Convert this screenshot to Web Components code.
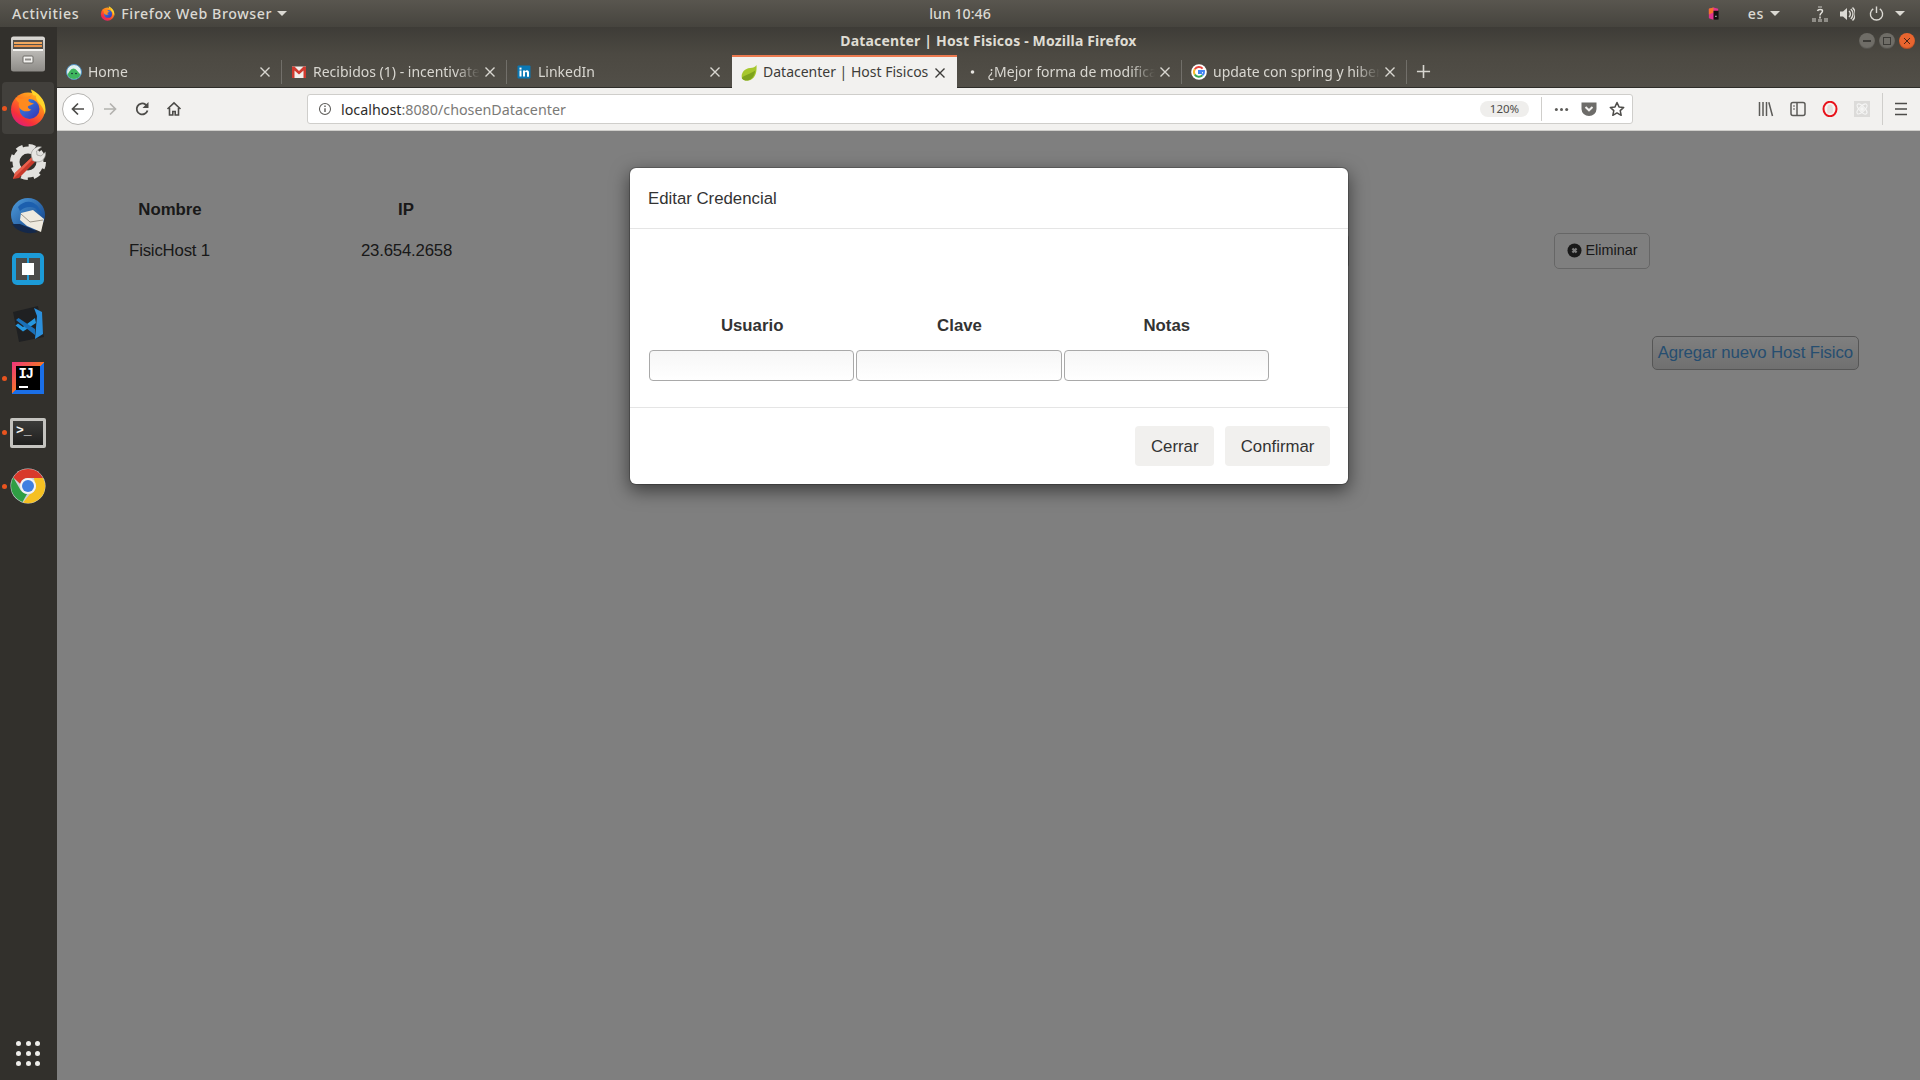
<!DOCTYPE html>
<html lang="es">
<head>
<meta charset="utf-8">
<title>Datacenter | Host Fisicos</title>
<style>
  html, body { margin: 0; height: 100%; overflow: hidden; }
  body { display: flex; flex-direction: column; font-family: "Noto Sans", sans-serif; background: #32302c; }
  .desk { flex: 1; display: flex; min-height: 0; }
</style>
</head>
<body>
<gnome-topbar></gnome-topbar>
<div class="desk">
  <app-dock></app-dock>
  <browser-window>
    <host-page></host-page>
    <credential-modal></credential-modal>
  </browser-window>
</div>

<script>
// Icon set, all drawn inline
const ICONS = {
  files: `<svg viewBox="0 0 36 36"><defs><linearGradient id="f" x1="0" y1="0" x2="0" y2="1"><stop offset="0" stop-color="#dbd9d5"/><stop offset="1" stop-color="#8d8b87"/></linearGradient></defs>
    <rect x="1" y="0.5" width="34" height="35" rx="2.5" fill="url(#f)"/><rect x="3" y="4" width="30" height="10" fill="#55504a"/>
    <rect x="4" y="6" width="28" height="2" fill="#f0a860"/><rect x="4" y="9" width="28" height="2" fill="#e8924a"/><rect x="3" y="13" width="30" height="2" fill="#f4f3f0"/>
    <rect x="13" y="20" width="10" height="7" rx="1" fill="#f2f1ee" stroke="#6d6b67"/><rect x="15" y="22.5" width="6" height="2" fill="#8f8d89"/></svg>`,
  firefox: `<svg viewBox="0 0 36 38"><defs><linearGradient id="a" x1="0.85" y1="0" x2="0.2" y2="1"><stop offset="0" stop-color="#ffc21f"/><stop offset="0.4" stop-color="#ff7a1f"/><stop offset="0.75" stop-color="#f6303a"/><stop offset="1" stop-color="#d81b86"/></linearGradient><linearGradient id="b" x1="0" y1="0" x2="1" y2="1"><stop offset="0" stop-color="#2f8ee8"/><stop offset="1" stop-color="#3b2fb0"/></linearGradient></defs>
    <circle cx="18" cy="20.5" r="17" fill="url(#a)"/><circle cx="19.5" cy="20" r="10" fill="url(#b)"/>
    <path d="M21 0.5c7 3 14.500 10 14.500 20 0 2-.3 3.500-.8 5-1-8-5-10-7-13-1.500-2.500-2-4-1.500-6-2 .5-4 0-5.200-6z" fill="#ffd52b"/>
    <path d="M6 9c3 0 5 1 7 .5 3-1 7-3 9-3-2 2-4 4-3.500 5.500 1 1.500 4 2.500 5.500 2-2 2.500-5 2-6 3.500-.8 1.500 2 3 3.500 3-2 2-6 2.500-9 1-3-1.500-4.500-4.500-3.500-7.500-1.500-1.500-3-3-3.500-5.500z" fill="#ff8a1f"/></svg>`,
  tools: `<svg viewBox="0 0 36 36"><circle cx="18" cy="18" r="12" fill="none" stroke="#e2e1de" stroke-width="7"/><circle cx="18" cy="18" r="15.500" fill="none" stroke="#e2e1de" stroke-width="5" stroke-dasharray="6.500 5.700"/>
    <path d="M3 35 L5 29 L22 13 L26 17 L9 34z" fill="#c8392b"/><path d="M3 35 L5 29 L22 13 L23.500 14.500 L7 31z" fill="#e8604c"/>
    <path d="M22 14c-2-4 0-9 5-11 2-.5 3.500-.5 4.500 0l-5 4 .5 4 4 1 4.500-4c.5 4-1 7-4 9-3 1.500-6.500 1-9-.5z" fill="#e6e5e2" stroke="#8a8986" stroke-width=".6"/></svg>`,
  thunderbird: `<svg viewBox="0 0 36 36"><defs><linearGradient id="t" x1="0" y1="0" x2="1" y2="1"><stop offset="0" stop-color="#4f9ede"/><stop offset="1" stop-color="#0f3a80"/></linearGradient></defs>
    <circle cx="18" cy="17" r="17" fill="url(#t)"/><path d="M2 26c5 8 16 11 26 8l-8-4-10-4z" fill="#14284a"/><path d="M11 15 L23 12 L34 21 L31 34 L17 28 L10 22z" fill="#efeadf"/><path d="M11 16 L20 24 L33 22" fill="none" stroke="#9c968a" stroke-width="1"/><path d="M8 9c4-5 12-7 17-3 3 2 6 6 7 11l-7-7c-5-2-11-1-15 3z" fill="#1c5fae"/></svg>`,
  bracket: `<svg viewBox="0 0 32 32"><rect x="0" y="0" width="32" height="32" rx="5" fill="#1c9bd8"/><rect x="4" y="5" width="24" height="22" fill="#4b4a48"/><rect x="10" y="10" width="12" height="12" fill="#fff"/><rect x="15" y="5" width="2" height="5" fill="#1c9bd8"/><rect x="15" y="22" width="2" height="5" fill="#1c9bd8"/></svg>`,
  vscode: `<svg viewBox="0 0 36 36"><path d="M3 6 L28 0 L34 31 L9 36z" fill="#1f2022"/><path d="M24 2 L32 6 L33 28 L25 33 L27 10z" fill="#2b8fdc"/><path d="M25 12 L13 21 L8 17.500 L5.500 19.500 L13 25.500 L26 17z" fill="#2597e0"/><path d="M6 14 L8.500 12 L25 23 L25 29 L16 22z" fill="#1a70b8"/></svg>`,
  chrome: `<svg viewBox="0 0 36 36"><circle cx="18" cy="18" r="17.500" fill="#c9d1d6"/>
    <path d="M3.300 9.500A17 17 0 0 1 33 10H18a8 8 0 0 0-7.700 6z" fill="#d8392b"/><path d="M3.300 9.500 10.500 22a8.500 8.500 0 0 0 6.500 4l-4.500 8A17 17 0 0 1 3.300 9.500z" fill="#2f9e44"/><path d="M33 10a17 17 0 0 1-20 24.500L20 26a8 8 0 0 0 4.500-12L24 10z" fill="#f5c022"/>
    <circle cx="18" cy="18" r="8" fill="#f3f3f3"/><circle cx="18" cy="18" r="6" fill="#3f7fe0"/></svg>`,
  basecamp: `<svg viewBox="0 0 16 16"><circle cx="8" cy="8" r="7.500" fill="#dff0ee" stroke="#4f8fc0"/><path d="M1.500 10.500c2-3 3.500-6 6-6 2.500 0 4.500 3.500 7 6-1 3-4 4.500-6.500 4.500s-5.500-1.500-6.500-4.500z" fill="#3fb55e"/><circle cx="6" cy="9.500" r=".8" fill="#123"/><circle cx="10" cy="9.500" r=".8" fill="#123"/></svg>`,
  gmail: `<svg viewBox="0 0 16 16"><rect x="1" y="2.500" width="14" height="11.500" fill="#f1efec"/><path d="M1 2.500h2.500L8 7l4.500-4.500H15V14h-2.500V6.500L8 10.500 3.500 6.500V14H1z" fill="#cf3a2f"/></svg>`,
  linkedin: `<svg viewBox="0 0 16 16"><rect x="1.500" y="1.500" width="13" height="13" rx="1" fill="#0a78b5"/><rect x="3.500" y="6.500" width="2" height="6" fill="#fff"/><rect x="3.500" y="3.600" width="2" height="2" fill="#fff"/><path d="M7 6.500h2v1c.5-.8 1.200-1.200 2-1.200 1.500 0 2 1 2 2.500v4h-2V9c0-.7-.3-1-.9-1-.7 0-1.100.5-1.100 1.200v3.300H7z" fill="#fff"/></svg>`,
  spring: `<svg viewBox="0 0 16 16"><path d="M15.500 0c.5 7-1 14-8 15.500-3 .3-5.500-.5-6.500-2C-.5 9 3 3.500 9 3c3-.2 5.500-1 6.500-3z" fill="#a6c72c"/><path d="M.8 13c3-3.500 8-3.500 13.500-7.500-1 6-3.500 9-7.500 10-2.500.3-5-.5-6-2.500z" fill="#7ea31c"/></svg>`,
  google: `<svg viewBox="0 0 16 16"><circle cx="8" cy="8" r="7.800" fill="#fff"/><path d="M11.600 4.600A5 5 0 0 0 3.800 5.300" fill="none" stroke="#e8453c" stroke-width="2"/><path d="M3.800 5.300a5 5 0 0 0 0 5.400" fill="none" stroke="#f9bb2d" stroke-width="2"/><path d="M3.800 10.700a5 5 0 0 0 7.600.6" fill="none" stroke="#34a853" stroke-width="2"/><path d="M11.400 11.300A5 5 0 0 0 13 7H8v2h3" fill="none" stroke="#4285f4" stroke-width="2"/></svg>`,
  dot: `<svg viewBox="0 0 16 16"><circle cx="6.500" cy="8" r="1.800" fill="#e6e4df"/></svg>`,
  back: `<svg viewBox="0 0 16 16" fill="none" stroke="#4d4c49" stroke-width="1.700"><path d="M14 8H2.500M8 2.500 2.500 8 8 13.500"/></svg>`,
  forward: `<svg viewBox="0 0 16 16" fill="none" stroke="#b3b2af" stroke-width="1.700"><path d="M2 8h11.500M8 2.500 13.500 8 8 13.500"/></svg>`,
  reload: `<svg viewBox="0 0 16 16" fill="none" stroke="#4d4c49" stroke-width="1.800"><path d="M13.500 9.500A5.500 5.500 0 1 1 11.500 3.500L13.500 5.500"/><path d="M14.500 1v6H8.500" fill="#4d4c49" stroke="none"/></svg>`,
  home: `<svg viewBox="0 0 16 16" fill="none" stroke="#4d4c49" stroke-width="1.600"><path d="M1.500 8 8 1.800 14.500 8"/><path d="M3.500 7v7h3.300v-3.500h2.400V14h3.300V7"/></svg>`,
  info: `<svg viewBox="0 0 16 16" fill="none" stroke="#5c5b58" stroke-width="1.200"><circle cx="8" cy="8" r="6.300"/><path d="M8 7v4.500" stroke-width="1.600"/><path d="M8 4v1.700" stroke-width="1.600"/></svg>`,
  dots: `<svg viewBox="0 0 16 16" fill="#5c5b58"><circle cx="2.500" cy="8" r="1.600"/><circle cx="8" cy="8" r="1.600"/><circle cx="13.500" cy="8" r="1.600"/></svg>`,
  pocket: `<svg viewBox="0 0 16 16"><path d="M.5 1.500h15V8a7.500 7 0 0 1-15 0z" fill="#6d6c69"/><path d="M4.500 6 8 9.300 11.500 6" fill="none" stroke="#f2f1ef" stroke-width="2"/></svg>`,
  star: `<svg viewBox="0 0 16 16"><path d="M8 1.500l2 4.400 4.700.5-3.500 3.200 1 4.700L8 11.900l-4.200 2.400 1-4.700L1.300 6.400 6 5.900z" fill="none" stroke="#4d4c49" stroke-width="1.500" stroke-linejoin="round"/></svg>`,
  library: `<svg viewBox="0 0 16 16" stroke="#5c5b58" stroke-width="1.500" fill="none"><path d="M1.500 1v14M5 1v14M8.500 1v14M10.800 1.200l3.700 13.800"/></svg>`,
  sidebar: `<svg viewBox="0 0 16 16" fill="none" stroke="#5c5b58" stroke-width="1.500"><rect x="1" y="1.500" width="14" height="13" rx="2"/><path d="M7 1.500v13"/><path d="M3 5h2M3 8h2" stroke-width="1.200"/></svg>`,
  opera: `<svg viewBox="0 0 16 16"><ellipse cx="8" cy="8" rx="6.500" ry="7.200" fill="#f7f4f2" stroke="#e8141c" stroke-width="2"/><path d="M5.500 12.500c-.6-3-.6-6 .4-8 .9-1.300 3.300-1.300 4.200 0 1 2 1 5 .4 8" fill="#e3dfdc"/></svg>`,
  ext: `<svg viewBox="0 0 16 16"><rect width="16" height="16" fill="#dcdbd9"/><circle cx="8" cy="8" r="2" fill="#f5f5f4"/><ellipse cx="8" cy="8" rx="6.500" ry="2.600" fill="none" stroke="#f5f5f4" stroke-width="1.100" transform="rotate(45 8 8)"/><ellipse cx="8" cy="8" rx="6.500" ry="2.600" fill="none" stroke="#f5f5f4" stroke-width="1.100" transform="rotate(-45 8 8)"/></svg>`,
  menu: `<svg viewBox="0 0 16 16" stroke="#4d4c49" stroke-width="1.700"><path d="M2 2.500h12M2 8h12M2 13.500h12"/></svg>`,
  close: `<svg viewBox="0 0 12 12" fill="none" stroke="currentColor" stroke-width="1.400"><path d="M1.500 1.500l9 9M10.500 1.500l-9 9"/></svg>`,
  plus: `<svg viewBox="0 0 16 16" stroke="#d8d6d0" stroke-width="1.700"><path d="M8 1v14M1 8h14"/></svg>`,
  jetbrains: `<svg viewBox="0 0 12 14"><path d="M1 2 6 .5 11 2v10l-5 1.800L1 12z" fill="#e0348f"/><path d="M1 2 6 .5V6L1 8z" fill="#f5732a"/><path d="M6 4h5.500v9.500L6 13.800z" fill="#111"/><path d="M7.800 10h1.600" stroke="#eee"/></svg>`,
  network: `<svg viewBox="0 0 16 16"><g fill="#8f8d87"><rect x="0" y="12" width="4" height="4"/><rect x="6" y="0" width="4" height="2"/><rect x="12" y="12" width="4" height="4"/><rect x="6" y="13" width="4" height="3"/></g><path d="M5.500 5c.5-2 5-2 5 0 0 2-2.500 2-2.500 4.500M8 10.500v2" fill="none" stroke="#e4e2dc" stroke-width="1.500"/></svg>`,
  volume: `<svg viewBox="0 0 16 16" fill="none" stroke="#dcdad4" stroke-width="1.400"><path d="M1 5.500h3L8 2v12l-4-3.500H1z" fill="#dcdad4" stroke="none"/><path d="M10 5a4 4 0 0 1 0 6M11.800 3a6.800 6.800 0 0 1 0 10M13.500 1.500a9 9 0 0 1 0 13"/></svg>`,
  power: `<svg viewBox="0 0 16 16" fill="none" stroke="#dcdad4" stroke-width="1.500"><path d="M8 .5v7"/><path d="M4.500 3a6.500 6.500 0 1 0 7 0"/></svg>`
};

class AppIcon extends HTMLElement {
  connectedCallback() {
    const size = this.getAttribute('size') || 16;
    this.attachShadow({ mode: 'open' });
    this.shadowRoot.innerHTML = `
      <style>
        :host { display: inline-flex; flex: none; width: ${size}px; height: ${size}px; }
        svg { width: 100%; height: 100%; display: block; }
      </style>
      ${ICONS[this.getAttribute('name')] || ''}
    `;
  }
}

class GnomeTopbar extends HTMLElement {
  constructor() {
    super();
    this.attachShadow({ mode: 'open' });
    this.shadowRoot.innerHTML = `
      <style>
        :host {
          display: grid; grid-template-columns: 1fr auto 1fr; align-items: center;
          height: 27px; flex: none; color: #dbd9d3;
          font: 500 14.2px "Noto Sans", sans-serif;
          background: linear-gradient(#59564f, #46443e);
        }
        .side { display: flex; align-items: center; }
        .right { justify-content: flex-end; }
        .caret { width: 0; height: 0; border: 5px solid transparent; border-top: 5px solid #dbd9d3; border-bottom: 0; }
        .spaced { letter-spacing: .6px; }
        .activities { margin-left: 12px; }
        .ff { margin-left: 21px; }
        .app { margin-left: 6px; }
      </style>
      <div class="side">
        <span class="activities spaced">Activities</span>
        <app-icon class="ff" name="firefox" size="15"></app-icon>
        <span class="app spaced">Firefox Web Browser</span>
        <span class="caret" style="margin-left:5px"></span>
      </div>
      <div>lun 10:46</div>
      <div class="side right">
        <app-icon name="jetbrains" size="13"></app-icon>
        <span class="spaced" style="margin-left:28px">es</span>
        <span class="caret" style="margin-left:6px"></span>
        <app-icon style="margin-left:32px" name="network" size="16"></app-icon>
        <app-icon style="margin-left:11px" name="volume" size="16"></app-icon>
        <app-icon style="margin-left:14px" name="power" size="15"></app-icon>
        <span class="caret" style="margin-left:11px;margin-right:15px"></span>
      </div>
    `;
  }
}

class DockItem extends HTMLElement {
  connectedCallback() {
    this.attachShadow({ mode: 'open' });
    this.shadowRoot.innerHTML = `
      <style>
        :host { display: flex; align-items: center; justify-content: center; position: relative; width: 57px; height: 54px; }
        :host([active]) .box { background: rgba(255,255,255,.08); }
        .box { width: 52px; height: 52px; border-radius: 4px; display: flex; align-items: center; justify-content: center; margin-left: -1px; }
        :host([running])::before {
          content: ''; position: absolute; left: 2px; top: 25px; width: 5px; height: 5px; border-radius: 50%; background: #e9541f;
        }
      </style>
      <div class="box"><slot></slot></div>
    `;
  }
}

class AppDock extends HTMLElement {
  constructor() {
    super();
    this.attachShadow({ mode: 'open' });
    this.shadowRoot.innerHTML = `
      <style>
        :host { display: flex; flex-direction: column; width: 57px; flex: none; background: #32302c; }
        .grid { margin-top: auto; margin-bottom: 14px; margin-left: 16px; display: grid; grid-template-columns: repeat(3, 5px); gap: 5px 4.700px; }
        .grid i { width: 5px; height: 5px; border-radius: 50%; background: #efeeeb; }
        .ij, .term { display: flex; box-sizing: border-box; }
        .ij {
          width: 32px; height: 32px; padding: 4px; margin-left: -1px;
          background: linear-gradient(135deg, #f0347e, #f5732a 50%, #1b6fe8 50%, #1b6fe8);
        }
        .ij div { flex: 1; background: #000; color: #fff; font: 700 14px "Liberation Mono", monospace; letter-spacing: -1.5px; padding: 2px 0 0 3px; line-height: 12px; position: relative; }
        .ij div::after { content: ''; position: absolute; left: 3px; bottom: 2px; width: 9px; height: 2px; background: #fff; }
        .term {
          width: 36px; height: 30px; border: 3px solid #c4c3bf; border-radius: 2px; margin-top: 1px;
          background: linear-gradient(#3c3c3a, #1f1f1e); color: #f4f4f2;
          font: 700 13px "Liberation Mono", monospace; padding: 3px 0 0 3px; line-height: 14px;
        }
      </style>
      <dock-item><app-icon name="files" size="36"></app-icon></dock-item>
      <dock-item active running><app-icon name="firefox" size="38"></app-icon></dock-item>
      <dock-item><app-icon name="tools" size="36"></app-icon></dock-item>
      <dock-item><app-icon name="thunderbird" size="36"></app-icon></dock-item>
      <dock-item><app-icon name="bracket" size="32" style="margin-top:-2px"></app-icon></dock-item>
      <dock-item><app-icon name="vscode" size="36"></app-icon></dock-item>
      <dock-item running><div class="ij"><div>IJ</div></div></dock-item>
      <dock-item running><div class="term">&gt;_</div></dock-item>
      <dock-item running><app-icon name="chrome" size="36"></app-icon></dock-item>
      <div class="grid">${'<i></i>'.repeat(9)}</div>
    `;
  }
}

class BrowserTab extends HTMLElement {
  connectedCallback() {
    this.attachShadow({ mode: 'open' });
    this.shadowRoot.innerHTML = `
      <style>
        :host {
          display: flex; align-items: center; width: 225px; flex: none; box-sizing: border-box;
          padding: 2px 0 0 9px; position: relative; color: #d9d7d1; font-size: 14px;
        }
        :host([sep])::after { content: ''; position: absolute; right: 0; top: 5px; height: 24px; width: 1px; background: rgba(255,255,255,.2); }
        :host([active]) { background: #f2f1ef; color: #3d3c39; margin-bottom: -1px; border-top: 2px solid #ec7a50; padding-top: 0; }
        .label {
          margin: -2px 0 0 6px; width: 167px; white-space: nowrap; overflow: hidden;
          -webkit-mask-image: linear-gradient(to right, #000 85%, transparent);
        }
        :host([active]) .label { -webkit-mask-image: none; }
        .x { margin-left: 4px; }
      </style>
      <app-icon name="${this.getAttribute('icon')}" size="16"></app-icon>
      <span class="label"><slot></slot></span>
      <app-icon class="x" name="close" size="12"></app-icon>
    `;
  }
}

class BrowserWindow extends HTMLElement {
  constructor() {
    super();
    this.attachShadow({ mode: 'open' });
    this.shadowRoot.innerHTML = `
      <style>
        :host { display: flex; flex-direction: column; flex: 1; min-width: 0; font-family: "Noto Sans", sans-serif; }
        .head { background: linear-gradient(#3e3c37, #4c4942 45%, #524f48); flex: none; }
        .title {
          height: 28px; display: grid; grid-template-columns: 1fr auto 1fr; align-items: center;
          color: #dfdcd3; font-size: 14px; font-weight: 700; letter-spacing: .17px;
        }
        .title > span:nth-child(2) { margin-top: -2px; }
        .wbtns { display: flex; gap: 4px; justify-content: flex-end; padding-right: 5px; margin-top: -1px; }
        .wbtns i { width: 16px; height: 16px; border-radius: 50%; background: #6f6d67; box-shadow: inset 0 -1px 1px rgba(0,0,0,.25); position: relative; }
        .wbtns i.min::after { content: ''; position: absolute; left: 4px; top: 7.500px; width: 8px; height: 1.500px; background: #3c3b37; }
        .wbtns i.max::after { content: ''; position: absolute; left: 4px; top: 4px; width: 6px; height: 6px; border: 1px solid #3c3b37; }
        .wbtns i.cls { background: #e9652f; color: #3c2015; display: flex; align-items: center; justify-content: center; }
        .strip { display: flex; height: 32px; border-bottom: 1px solid #2e2d29; }
        .new { display: flex; align-items: center; padding: 0 0 0 9px; }
        .nav {
          height: 43px; flex: none; box-sizing: border-box; background: #f2f1ef; border-bottom: 1px solid #cfcecb;
          display: flex; align-items: center; position: relative;
        }
        .circle { width: 32px; height: 32px; margin-left: 5px; box-sizing: border-box; border: 1px solid #b5b4b1; border-radius: 50%; background: #fff; display: flex; align-items: center; justify-content: center; }
        .nb { width: 32px; height: 32px; display: flex; align-items: center; justify-content: center; }
        .url {
          width: 1326px; height: 30px; box-sizing: border-box; flex: none;
          background: #fff; border: 1px solid #cfcecb; border-radius: 3px; display: flex; align-items: center;
          font-size: 14.3px; color: #7b7a77; padding-left: 10px;
        }
        .url b { font-weight: 400; color: #2e2d2b; }
        .url .addr { margin-left: 9px; flex: 1; }
        .zoom { width: 49px; height: 16px; line-height: 16px; border-radius: 8px; background: #efeeec; font-size: 11.500px; color: #4d4c49; text-align: center; margin-right: 12px; }
        .vsep { width: 1px; height: 24px; background: #cfcecb; }
        .tail { display: flex; align-items: center; padding-left: 125px; }
        .tail app-icon { margin-right: 16px; }
        .body { flex: 1; position: relative; min-height: 0; background: #fff; }
      </style>
      <div class="head">
        <div class="title">
          <span></span>
          <span>Datacenter | Host Fisicos - Mozilla Firefox</span>
          <div class="wbtns"><i class="min"></i><i class="max"></i><i class="cls"><app-icon name="close" size="8"></app-icon></i></div>
        </div>
        <div class="strip">
          <browser-tab icon="basecamp" sep>Home</browser-tab>
          <browser-tab icon="gmail" sep>Recibidos (1) - incentivate</browser-tab>
          <browser-tab icon="linkedin">LinkedIn</browser-tab>
          <browser-tab icon="spring" active>Datacenter | Host Fisicos</browser-tab>
          <browser-tab icon="dot" sep>¿Mejor forma de modificar</browser-tab>
          <browser-tab icon="google" sep>update con spring y hibernate</browser-tab>
          <div class="new"><app-icon name="plus" size="15"></app-icon></div>
        </div>
      </div>
      <div class="nav">
        <div class="circle"><app-icon name="back" size="16"></app-icon></div>
        <div class="nb"><app-icon name="forward" size="16"></app-icon></div>
        <div class="nb"><app-icon name="reload" size="16"></app-icon></div>
        <div class="nb"><app-icon name="home" size="16"></app-icon></div>
        <div class="url" style="margin-left:117px">
          <app-icon name="info" size="14"></app-icon>
          <span class="addr"><b>localhost</b>:8080/chosenDatacenter</span>
          <span class="zoom">120%</span>
          <span class="vsep"></span>
          <app-icon style="margin-left:12px" name="dots" size="15"></app-icon>
          <app-icon style="margin-left:12px" name="pocket" size="16"></app-icon>
          <app-icon style="margin-left:12px;margin-right:7px" name="star" size="16"></app-icon>
        </div>
        <div class="tail">
          <app-icon name="library" size="16"></app-icon>
          <app-icon name="sidebar" size="16"></app-icon>
          <app-icon name="opera" size="16"></app-icon>
          <app-icon name="ext" size="16"></app-icon>
          <span class="vsep" style="height:32px;margin-right:10px;margin-left:-4px"></span>
          <app-icon name="menu" size="16" style="margin:0"></app-icon>
        </div>
      </div>
      <div class="body"><slot></slot></div>
    `;
  }
}

// The page behind the dialog
class HostPage extends HTMLElement {
  constructor() {
    super();
    this.attachShadow({ mode: 'open' });
    this.shadowRoot.innerHTML = `
      <style>
        :host {
          display: flex; flex-direction: column; height: 100%; position: relative; background: #fff;
          font: 16.8px/24px "Liberation Sans", sans-serif; color: #333;
        }
        .table { display: grid; grid-template-columns: 224px 248px 1fr 96px; margin: 67px 270px 0 0; align-items: center; row-gap: 11px; }
        .table > div { text-align: center; }
        .th { font-weight: 700; padding-left: 2px; }
        .td { letter-spacing: -.2px; padding-left: 1px; }
        .td + .td { padding-left: 3px; }
        .btn {
          box-sizing: border-box; border: 1px solid #ccc; border-radius: 5px; background: #fff; color: #333;
          font: inherit; font-size: 14.4px; line-height: 32px; height: 36px; padding-bottom: 2px; display: flex; align-items: center; justify-content: center; gap: 4px;
        }
        .btn svg { width: 15px; height: 15px; }
        .ghost { width: 90px; height: 36px; justify-self: end; margin-right: 205px; box-sizing: border-box; border: 1px solid #ccc; border-radius: 5px; }
        .add {
          align-self: flex-end; margin: 67px 61px 0 0; height: 34px; box-sizing: border-box; padding: 0 5px;
          border: 1px solid #adadad; border-radius: 5px; line-height: 31px; color: #4d9ce0; letter-spacing: -.1px;
          background: linear-gradient(#fff, #e0e0e0);
        }
        .veil { position: absolute; inset: 0; background: rgba(0,0,0,.5); }
      </style>
      <div class="table">
        <div class="th">Nombre</div><div class="th">IP</div><span></span><span></span>
        <div class="td">FisicHost 1</div><div class="td">23.654.2658</div>
        <span class="ghost"></span>
        <span class="btn"><svg viewBox="0 0 16 16"><circle cx="8" cy="8" r="7.500" fill="#333"/><path d="M5.800 5.800l4.400 4.400M10.200 5.800l-4.400 4.400" stroke="#fff" stroke-width="2.400"/></svg>Eliminar</span>
      </div>
      <div class="add">Agregar nuevo Host Fisico</div>
      <div class="veil"></div>
    `;
  }
}

class CredentialModal extends HTMLElement {
  constructor() {
    super();
    this.attachShadow({ mode: 'open' });
    this.shadowRoot.innerHTML = `
      <style>
        :host {
          position: absolute; top: 36px; left: 572px; width: 720px; box-sizing: border-box;
          background: #fff; border: 1px solid rgba(0,0,0,.2); border-radius: 7px; background-clip: padding-box;
          box-shadow: 0 6px 18px rgba(0,0,0,.5);
          font: 16.8px/24px "Liberation Sans", sans-serif; color: #333;
        }
        header { padding: 19px 18px 17px; border-bottom: 1px solid #e5e5e5; }
        main { padding: 84px 0 26px 19px; display: grid; grid-template-columns: repeat(3, 205.33px); column-gap: 2px; }
        .lbl { font-weight: 700; text-align: center; padding: 1px 0 0 1px; margin-bottom: 12px; }
        .inp {
          height: 31px; box-sizing: border-box; border: 1px solid #a9a9a9; border-radius: 4px;
          background: linear-gradient(#f6f6f6, #fff);
        }
        footer { border-top: 1px solid #e5e5e5; padding: 18px 18px 18px 0; display: flex; justify-content: flex-end; gap: 11px; }
        .b { height: 40px; line-height: 42px; padding: 0 15.6px; background: #f1f0ee; border-radius: 4px; }
      </style>
      <header>Editar Credencial</header>
      <main>
        <div class="lbl">Usuario</div><div class="lbl">Clave</div><div class="lbl">Notas</div>
        <div class="inp"></div><div class="inp"></div><div class="inp"></div>
      </main>
      <footer><div class="b">Cerrar</div><div class="b">Confirmar</div></footer>
    `;
  }
}

customElements.define('app-icon', AppIcon);
customElements.define('gnome-topbar', GnomeTopbar);
customElements.define('dock-item', DockItem);
customElements.define('app-dock', AppDock);
customElements.define('browser-tab', BrowserTab);
customElements.define('browser-window', BrowserWindow);
customElements.define('host-page', HostPage);
customElements.define('credential-modal', CredentialModal);
</script>
</body>
</html>
